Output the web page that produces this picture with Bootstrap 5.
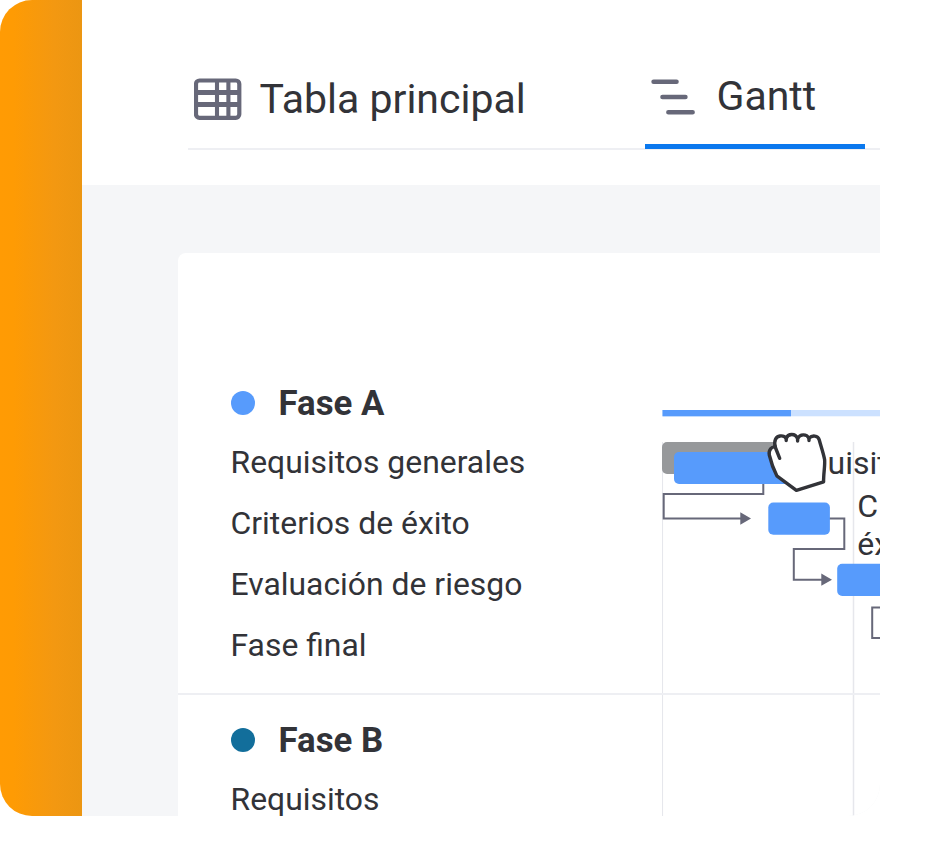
<!DOCTYPE html>
<html lang="es">
<head>
<meta charset="utf-8">
<meta name="viewport" content="width=device-width, initial-scale=1">
<title>Gantt</title>
<link href="https://cdn.jsdelivr.net/npm/bootstrap@5.3.0/dist/css/bootstrap.min.css" rel="stylesheet">
<style>
  body { font-family: Roboto, "Liberation Sans", sans-serif; color: #323338; }
  .frame { width: 880px; height: 816px; border-radius: 32px; }
  .rail { width: 82px; background: linear-gradient(90deg, #ff9b04 0, #fe9b04 13px, #f39811 54px, #ec9612 82px); }
  .topbar { height: 185px; padding: 50px 0 0 106px; }
  .tabs { height: 100px; border-bottom: 2px solid #eeeff3; }
  .tab-item { font-size: 41px; line-height: 48px; white-space: nowrap; }
  .tab-main { width: 457px; padding: 25px 0 0 6px; gap: 17.5px; }
  .tab-gantt { width: 220px; height: 99px; padding: 22px 0 0 6px; gap: 20.5px; border-bottom: 5px solid #0b78ee; }
  .board { background: #f5f6f8; padding: 68px 0 0 96px; }
  .sheet { border-top-left-radius: 8px; }
  .names { width: 484px; padding-top: 104px; }
  .phase { padding: 17.5px 0 0 52.5px; }
  .phase + .phase { border-top: 2px solid #eeeff3; padding-top: 16px; }
  .phase:first-child { height: 336px; }
  .phase-title { height: 57px; gap: 24px; font-size: 34.8px; line-height: 42px; }
  .task { height: 61.25px; font-size: 31.88px; line-height: 48px; padding-top: 1px; white-space: nowrap; }
  .phase:first-child .task { padding: 0 0 1px; }
  .dot { width: 24px; height: 24px; }
  .dot-a { background: #579bfc; }
  .dot-b { background: #126e9b; }
  .chart text { font-size: 32px; fill: #323338; }
</style>
</head>
<body class="bg-white overflow-hidden">
<div class="frame d-flex overflow-hidden">
  <aside class="rail flex-shrink-0"></aside>
  <main class="d-flex flex-column flex-grow-1 overflow-hidden">
    <header class="topbar bg-white flex-shrink-0">
      <nav class="tabs d-flex align-items-start">
        <div class="tab-item tab-main d-flex flex-shrink-0">
          <svg class="flex-shrink-0" width="48" height="48" viewBox="0 0 48 48" fill="none" stroke="#676879">
            <rect x="2" y="5.5" width="43.3" height="37.3" rx="3.5" stroke-width="4.2"/>
            <path d="M2 17.5H45M2 29.5H45" stroke-width="4.8"/>
            <path d="M23 5V43M34.4 5V43" stroke-width="4.1"/>
          </svg>
          <span>Tabla principal</span>
        </div>
        <div class="tab-item tab-gantt d-flex flex-shrink-0">
          <svg class="flex-shrink-0" width="45" height="48" viewBox="0 0 45 48" fill="none" stroke="#676879" stroke-width="4.6" stroke-linecap="round">
            <path d="M2.6 9.7H25.5M11.5 25H34.4M17.4 40.3H41.6"/>
          </svg>
          <span>Gantt</span>
        </div>
      </nav>
    </header>
    <section class="board flex-grow-1 overflow-hidden">
      <div class="sheet bg-white d-flex h-100 overflow-hidden">
        <div class="names flex-shrink-0">
          <div class="phase">
            <div class="phase-title d-flex align-items-center fw-bold"><span class="dot dot-a rounded-circle"></span><span>Fase A</span></div>
            <div class="task d-flex align-items-center">Requisitos generales</div>
            <div class="task d-flex align-items-center">Criterios de éxito</div>
            <div class="task d-flex align-items-center">Evaluación de riesgo</div>
            <div class="task d-flex align-items-center">Fase final</div>
          </div>
          <div class="phase">
            <div class="phase-title d-flex align-items-center fw-bold"><span class="dot dot-b rounded-circle"></span><span>Fase B</span></div>
            <div class="task d-flex align-items-center">Requisitos</div>
          </div>
        </div>
        <svg class="chart flex-shrink-0" width="218" height="563" viewBox="662 253 218 563">
          <!-- Grid lines -->
          <path d="M662.3 442V816M853.5 442V816" stroke="#e6e7ec" stroke-width="1.5"/>
          <path d="M662 694H880" stroke="#eeeff3" stroke-width="2"/>
          <!-- Phase progress -->
          <rect x="662.5" y="410" width="218" height="6.3" fill="#cce1ff"/>
          <rect x="662.5" y="410" width="128.5" height="6.3" fill="#579bfc"/>
          <!-- Labels -->
          <text x="827.6" y="474">uisit</text>
          <text x="857.2" y="517">C</text>
          <text x="857.2" y="555">éx</text>
          <!-- Dependencies -->
          <g fill="none" stroke="#676879" stroke-width="2">
            <path d="M763.3 483V494H663.7V518.5H742"/>
            <path d="M829 518.5H844.3V549H793.8V579.7H823"/>
            <path d="M885 607.5H872.2V638H885"/>
          </g>
          <path d="M740.3 512.3L751 518.5L740.3 524.7ZM821.3 573.6L832 579.7L821.3 585.8Z" fill="#676879"/>
          <!-- Task bars -->
          <rect x="662" y="442" width="130" height="32" rx="5" fill="#97999b"/>
          <rect x="674" y="452" width="122" height="32" rx="5" fill="#579bfc"/>
          <rect x="768.3" y="502.5" width="61.6" height="32.3" rx="5" fill="#579bfc"/>
          <rect x="837.2" y="563.7" width="60" height="32.3" rx="5" fill="#579bfc"/>
          <!-- Grabbing hand -->
          <path d="M775.3 447C773.6 440.5 776 436.6 780 436C782.8 435.6 784.8 436.4 786.2 438.4C788 433.4 795.3 433 797.6 438.6C800 433.6 806.5 433.7 809 438.2C812 435 818 435.2 819.2 439.8C821 446.5 823.2 452.5 824.6 459.5C825.2 466 823.4 473.5 823.6 481.8L796.4 490.3L776.8 475.8C772.6 467.5 770.6 460.5 769.3 455C768.3 450 771.8 446.2 775.3 447Z" fill="#fff" stroke="#323338" stroke-width="3.4" stroke-linejoin="round"/>
          <path d="M774.8 446L779.7 458.3M786.2 438.4V440.5M797.6 438.6V441M809 438.2V440.5" fill="none" stroke="#323338" stroke-width="3.4" stroke-linecap="round"/>
        </svg>
      </div>
    </section>
  </main>
</div>
<script src="https://cdn.jsdelivr.net/npm/bootstrap@5.3.0/dist/js/bootstrap.bundle.min.js"></script>
</body>
</html>
